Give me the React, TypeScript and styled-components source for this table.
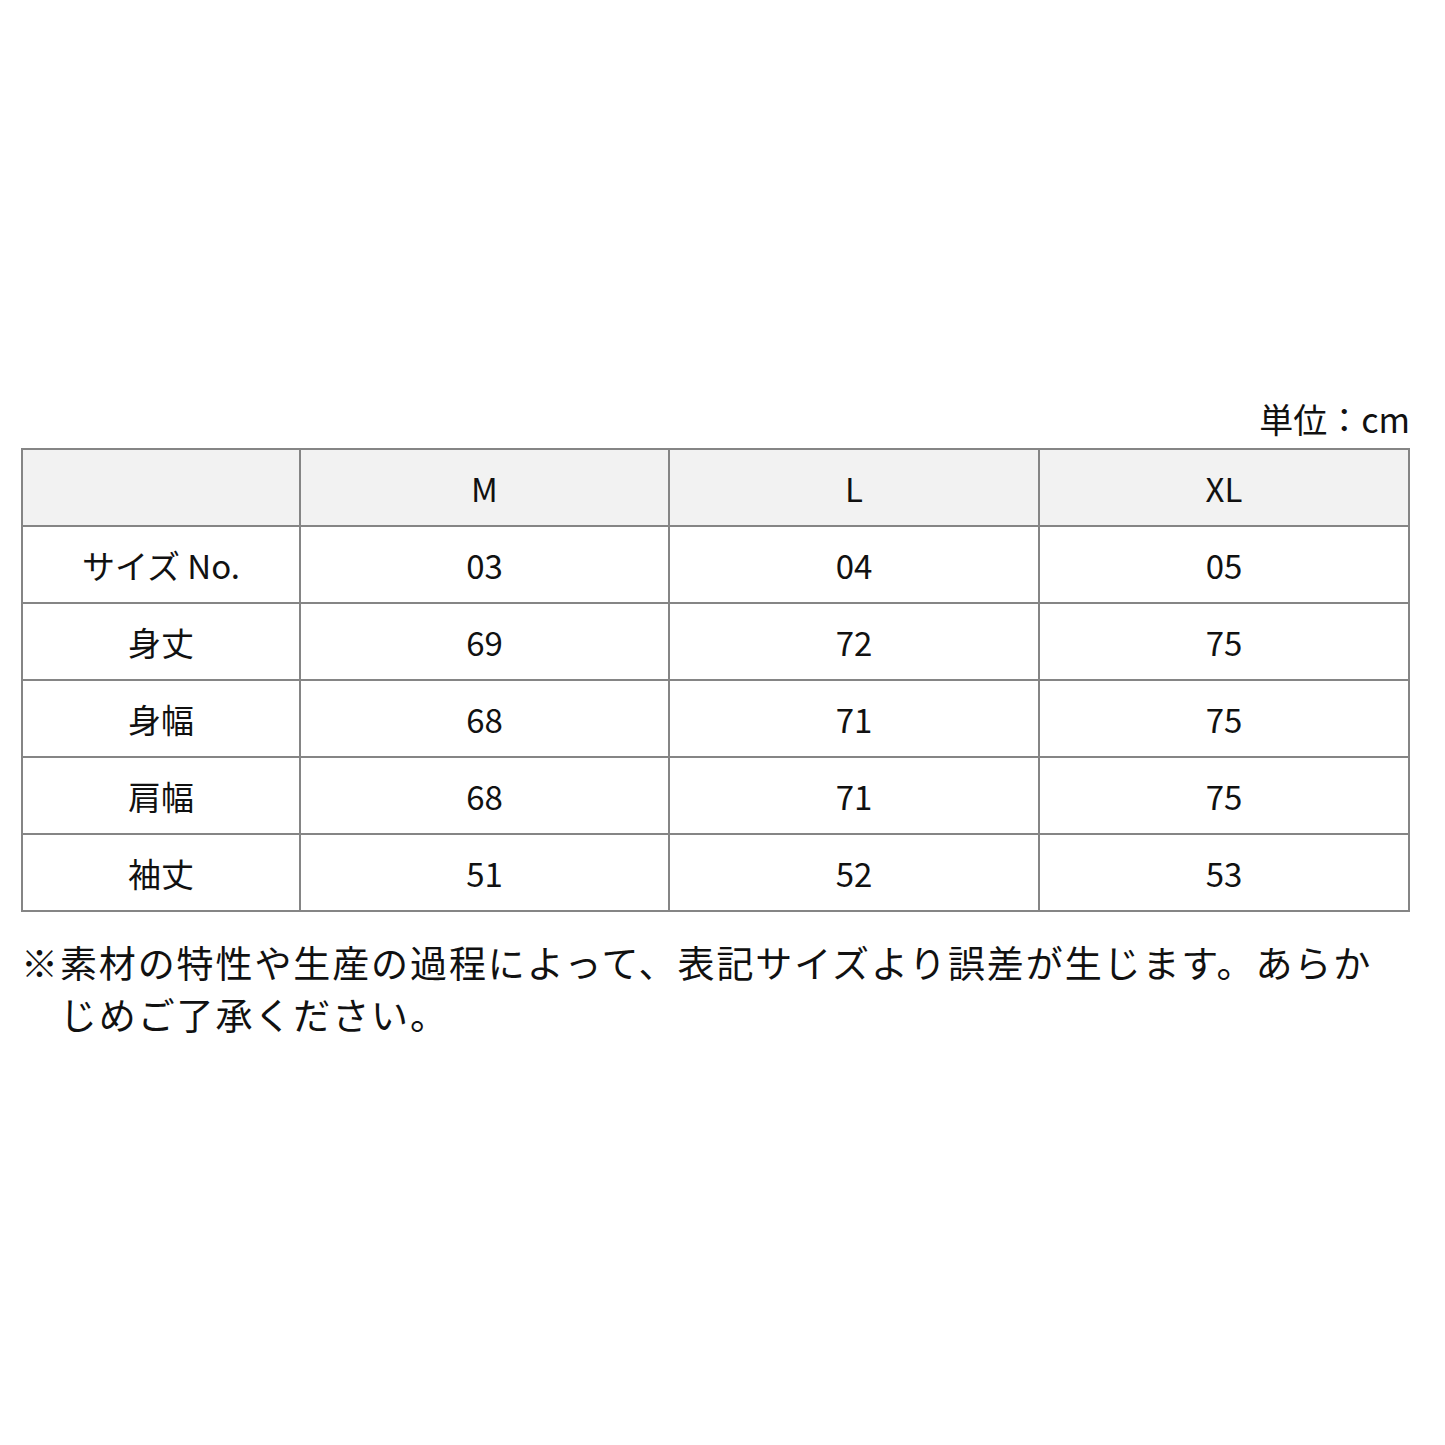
import React from 'react'
import styled, { createGlobalStyle } from 'styled-components'

const GlobalStyle = createGlobalStyle`
  html, body {
    margin: 0;
    padding: 0;
    background: #fff;
  }
  body {
    font-family: "Noto Sans CJK JP", "Noto Sans", sans-serif;
    color: #111;
  }
`

const Page = styled.div`
  width: 1445px;
  height: 1445px;
  box-sizing: border-box;
  padding: 395px 37px 0 21px;
`

const Unit = styled.div`
  text-align: right;
  font-size: 34px;
  line-height: 48px;
  height: 48px;
  margin-bottom: 5px;
  margin-right: -2px;
`

const Table = styled.table`
  width: 1387px;
  border-collapse: collapse;
  table-layout: fixed;
`

const Col = styled.col<{ $w: number }>`
  width: ${(p) => p.$w}px;
`

const Cell = styled.td`
  border: 2px solid #858585;
  height: 75px;
  padding: 0;
  text-align: center;
  vertical-align: middle;
  font-size: 33px;
  font-weight: 400;
  line-height: 40px;
  background: #fff;
`

const HeadCell = styled(Cell).attrs({ as: 'th' })`
  background: #f2f2f2;
`

const Note = styled.p`
  margin: 24px 0 0;
  font-size: 37px;
  line-height: 52px;
  letter-spacing: 1.9px;
  padding-left: 1.05em;
  text-indent: -1.05em;
  white-space: nowrap;
`

const widths = [278, 369, 370, 370]
const sizes = ['M', 'L', 'XL']

const rows: [string, string[]][] = [
  ['サイズ No.', ['03', '04', '05']],
  ['身丈', ['69', '72', '75']],
  ['身幅', ['68', '71', '75']],
  ['肩幅', ['68', '71', '75']],
  ['袖丈', ['51', '52', '53']],
]

export default function App() {
  return (
    <>
      <GlobalStyle />
      <Page>
        <Unit>単位：cm</Unit>
        <Table>
          <colgroup>
            {widths.map((w, i) => (
              <Col key={i} $w={w} />
            ))}
          </colgroup>
          <thead>
            <tr>
              <HeadCell />
              {sizes.map((s) => (
                <HeadCell key={s}>{s}</HeadCell>
              ))}
            </tr>
          </thead>
          <tbody>
            {rows.map(([label, vals]) => (
              <tr key={label}>
                <Cell>{label}</Cell>
                {vals.map((v, i) => (
                  <Cell key={i}>{v}</Cell>
                ))}
              </tr>
            ))}
          </tbody>
        </Table>
        <Note>
          ※素材の特性や生産の過程によって、表記サイズより誤差が生じます。あらか
          <br />
          じめご了承ください。
        </Note>
      </Page>
    </>
  )
}
